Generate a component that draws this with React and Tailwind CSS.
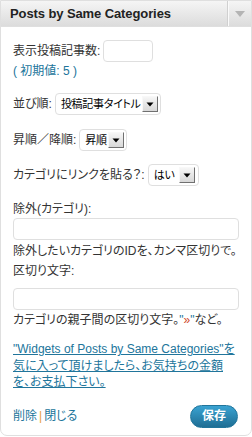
import React from "react";

const font = "[font-family:'Liberation_Sans','Noto_Sans_CJK_JP',sans-serif]";

function SelectBox({ label, width }) {
  return (
    <div className={`flex items-center h-[22px] border border-[#dfdfdf] rounded-[4px] bg-white pl-[5px] pr-[3px] shrink-0 ${width}`}>
      <span className="flex-1 text-[11px] leading-none text-black whitespace-nowrap tracking-[-0.3px]">{label}</span>
      <span className="ml-[1px] flex items-center justify-center w-[16px] h-[16px] border border-t-[#f8f8f8] border-l-[#f8f8f8] border-r-[#707070] border-b-[#707070] bg-gradient-to-b from-[#f6f6f6] to-[#d8d8d8] shrink-0">
        <svg width="8" height="5" viewBox="0 0 8 5"><path d="M0.5 0.5h7L4 4.5z" fill="#000" /></svg>
      </span>
    </div>
  );
}

export default function App() {
  return (
    <div className={`w-[252px] h-[437px] bg-white ${font} [font-feature-settings:'palt'] text-[#333]`}>
      <div className="w-[252px] h-[436px] border border-[#dfdfdf] rounded-b-[7px] flex flex-col overflow-hidden">
        <div className="h-[26px] flex bg-gradient-to-b from-[#f5f5f5] to-[#dcdcdc] border-b border-[#dfdfdf]">
          <div className="flex-1 flex items-center pl-[9px] text-[13px] font-bold text-[#222] tracking-[-0.1px]">Posts by Same Categories</div>
          <div className="w-[23px] flex items-center justify-center border-l border-[#fafafa] shadow-[-1px_0_0_#d0d0d0]">
            <svg width="10" height="6" viewBox="0 0 10 6"><path d="M0 0h10L5 6z" fill="#b4b4b4" /></svg>
          </div>
        </div>
        <div className="flex flex-col px-[12px] text-[12px]">
          <div className="flex items-center mt-[13px] h-[22px]">
            <span>表示投稿記事数:</span>
            <div className="ml-[3px] w-[50px] h-[22px] border border-[#dfdfdf] rounded-[4px] bg-white" />
          </div>
          <div className="mt-[1px] h-[16px] leading-[16px] text-[#21759b]">( 初期値: 5 )</div>
          <div className="flex items-center mt-[14px]">
            <span className="mr-[3px]">並び順:</span>
            <SelectBox label="投稿記事タイトル" width="w-[106px]" />
          </div>
          <div className="flex items-center mt-[14px]">
            <span className="mr-[3px]">昇順／降順:</span>
            <SelectBox label="昇順" width="w-[48px]" />
          </div>
          <div className="flex items-center mt-[13px]">
            <span className="mr-[3px]">カテゴリにリンクを貼る？:</span>
            <SelectBox label="はい" width="w-[51px]" />
          </div>
          <div className="mt-[15px] h-[16px] leading-[16px]">除外(カテゴリ):</div>
          <div className="mt-[1px] w-full h-[22px] border border-[#dfdfdf] rounded-[4px] bg-white" />
          <div className="mt-[3px] h-[17px] leading-[17px] whitespace-nowrap">除外したいカテゴリのIDを、カンマ区切りで。</div>
          <div className="mt-[3px] h-[16px] leading-[16px]">区切り文字:</div>
          <div className="mt-[9px] w-full h-[22px] border border-[#dfdfdf] rounded-[4px] bg-white" />
          <div className="mt-[2px] h-[17px] leading-[17px] whitespace-nowrap">
            カテゴリの親子間の区切り文字。<span className="text-[#21759b]">"<span className="text-[#d04a2a]">»</span>"</span>など。
          </div>
          <a className="mt-[12px] leading-[16.5px] text-[#21759b] underline whitespace-nowrap" href="#">
            "Widgets of Posts by Same Categories"を<br />気に入って頂けましたら、お気持ちの金額<br />を、お支払下さい。
          </a>
          <div className="mt-[14px] flex items-center justify-between">
            <div className="flex items-center text-[#21759b]">
              <span>削除</span>
              <span className="mx-[2px] text-[#e8a040]">|</span>
              <span>閉じる</span>
            </div>
            <button className="w-[48px] h-[23px] rounded-full border border-[#21759b] bg-gradient-to-b from-[#3aa3d2] to-[#1f6e94] text-white font-bold text-[12px] leading-none mr-[1px]">保存</button>
          </div>
        </div>
      </div>
    </div>
  );
}
